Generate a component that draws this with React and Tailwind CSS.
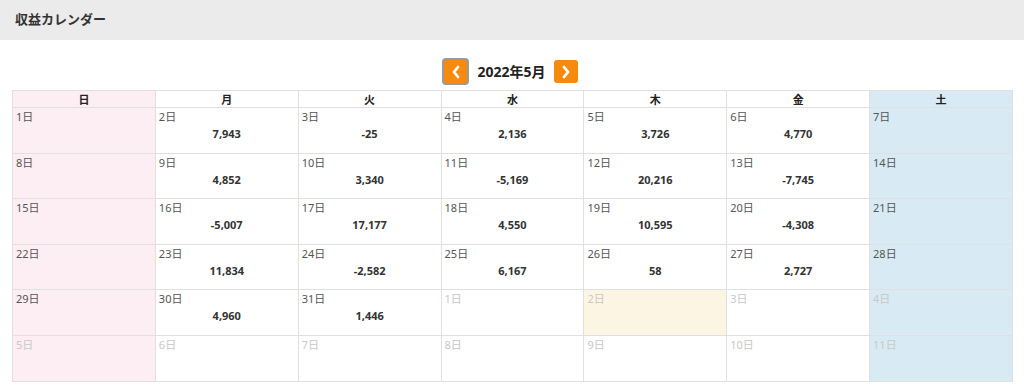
const WEEK = ['日', '月', '火', '水', '木', '金', '土']

// [day, amount, inMonth]
const CELLS = [
  [1, null, true], [2, '7,943', true], [3, '-25', true], [4, '2,136', true], [5, '3,726', true], [6, '4,770', true], [7, null, true],
  [8, null, true], [9, '4,852', true], [10, '3,340', true], [11, '-5,169', true], [12, '20,216', true], [13, '-7,745', true], [14, null, true],
  [15, null, true], [16, '-5,007', true], [17, '17,177', true], [18, '4,550', true], [19, '10,595', true], [20, '-4,308', true], [21, null, true],
  [22, null, true], [23, '11,834', true], [24, '-2,582', true], [25, '6,167', true], [26, '58', true], [27, '2,727', true], [28, null, true],
  [29, null, true], [30, '4,960', true], [31, '1,446', true], [1, null, false], [2, null, false], [3, null, false], [4, null, false],
  [5, null, false], [6, null, false], [7, null, false], [8, null, false], [9, null, false], [10, null, false], [11, null, false],
]

function colBg(i, today) {
  if (today) return 'bg-[#fdf5e4]'
  if (i === 0) return 'bg-[#fdeef3]'
  if (i === 6) return 'bg-[#d8ebf5]'
  return 'bg-white'
}

export default function App() {
  const rows = []
  for (let r = 0; r < 6; r++) rows.push(CELLS.slice(r * 7, r * 7 + 7))

  return (
    <div className="w-[1024px] h-[392px] bg-white font-['Noto_Sans','Noto_Sans_CJK_JP',sans-serif] text-[#333]">
      <div className="h-10 bg-[#ebebeb] flex items-center pl-[15px]">
        <h1 className="text-[13px] font-bold text-[#333]">収益カレンダー</h1>
      </div>

      <div className="px-3">
        <div className="flex items-center justify-center gap-2 pt-[18px] pb-[5px] pr-[4px]">
          <button className="w-[27px] h-[27px] rounded-[4px] border-2 border-[#9a9a9a] bg-[#f68a0c] flex items-center justify-center text-white">
            <ChevronLeft />
          </button>
          <span className="text-[14px] font-bold text-[#222] leading-none">2022年5月</span>
          <button className="w-[24px] h-[23px] rounded-[3px] bg-[#f68a0c] flex items-center justify-center text-white">
            <ChevronRight />
          </button>
        </div>

        <table className="w-[1001px] border-collapse table-fixed">
          <thead>
            <tr>
              {WEEK.map((w, i) => (
                <th
                  key={w}
                  className={`h-[17px] border border-[#e0e0e0] text-[11px] font-bold text-[#222] leading-none ${colBg(i, false)}`}
                >
                  {w}
                </th>
              ))}
            </tr>
          </thead>
          <tbody>
            {rows.map((row, r) => (
              <tr key={r}>
                {row.map(([day, amount, inMonth], i) => {
                  const today = !inMonth && r === 4 && day === 2
                  return (
                    <td
                      key={i}
                      className={`h-[45.6px] border border-[#e0e0e0] align-top p-0 ${colBg(i, today)}`}
                    >
                      <div className="pl-[3px] pt-[2px] text-[11px] leading-[14px] text-left">
                        <span className={inMonth ? 'text-[#555]' : 'text-[#c8c8c8]'}>{day}日</span>
                      </div>
                      {amount && (
                        <div className="text-center text-[11px] font-bold leading-[14px] mt-[3px] text-[#333]">
                          {amount}
                        </div>
                      )}
                    </td>
                  )
                })}
              </tr>
            ))}
          </tbody>
        </table>
      </div>
    </div>
  )
}

function ChevronLeft() {
  return (
    <svg width="12" height="16" viewBox="0 0 12 16" fill="none" stroke="currentColor" strokeWidth="2.8" strokeLinecap="round" strokeLinejoin="round">
      <polyline points="8,3 4,8 8,13" />
    </svg>
  )
}

function ChevronRight() {
  return (
    <svg width="12" height="16" viewBox="0 0 12 16" fill="none" stroke="currentColor" strokeWidth="2.8" strokeLinecap="round" strokeLinejoin="round">
      <polyline points="4,3 8,8 4,13" />
    </svg>
  )
}
